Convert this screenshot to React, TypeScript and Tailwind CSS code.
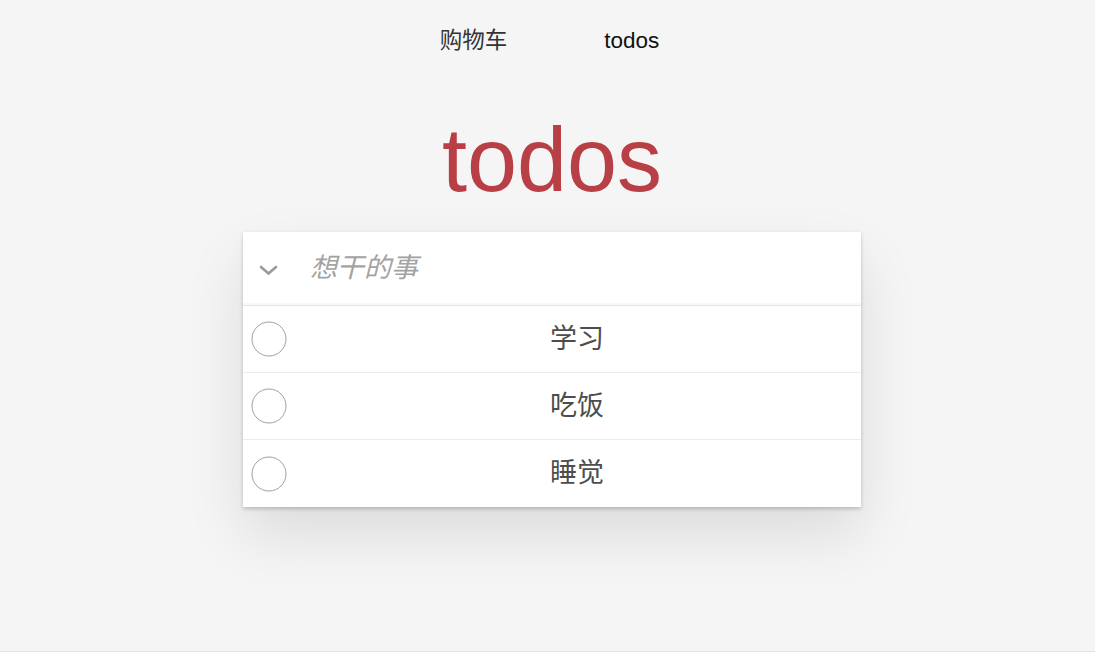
import React from "react";

const font = { fontFamily: '"Liberation Sans", Arial, "Noto Sans CJK SC", sans-serif' };

function Circle() {
  return (
    <svg width="36" height="36" viewBox="0 0 36 36" className="shrink-0">
      <circle cx="18" cy="18" r="17" fill="none" stroke="#a0a0a0" strokeWidth="1" />
    </svg>
  );
}

export default function App() {
  const todos = ["学习", "吃饭", "睡觉"];
  return (
    <div className="h-[652px] bg-[#f5f5f5] border-b border-[#e2e2e2] overflow-hidden" style={font}>
      <nav className="flex justify-center gap-[97px] pt-[27px] pl-[4px] text-[22.5px] leading-[27px]">
        <span className="text-[#333]">购物车</span>
        <span className="text-[#111]">todos</span>
      </nav>
      <div className="ml-[243px] w-[618px]">
        <h1 className="mt-[61px] text-center text-[90px] leading-none text-[#b83f45] font-normal">todos</h1>
        <div className="mt-[27px] bg-white shadow-[0_2px_4px_0_rgba(0,0,0,0.2),0_28px_56px_0_rgba(0,0,0,0.1)]">
          <div className="flex h-[73px] items-center shadow-[inset_0_-2px_1px_rgba(0,0,0,0.03)]">
            <div className="flex w-[67px] pl-[16px] pt-[4px]">
              <svg width="19" height="11" viewBox="0 0 19 11">
                <path d="M2 2 L9.5 8.5 L17 2" fill="none" stroke="#9a9a9a" strokeWidth="2.6" strokeLinecap="round" />
              </svg>
            </div>
            <span className="text-[27px] italic text-[#a3a3a3]">想干的事</span>
          </div>
          <ul className="border-t border-[#e6e6e6]">
            {todos.map((t, i) => (
              <li
                key={t}
                className={`relative flex h-[67px] items-center ${i < todos.length - 1 ? "border-b border-[#ededed]" : ""}`}
              >
                <div className="absolute left-[8px] top-1/2 -translate-y-1/2 flex">
                  <Circle />
                </div>
                <span className="flex-1 pl-[67px] pr-[17px] text-center text-[27px] text-[#4d4d4d]">{t}</span>
              </li>
            ))}
          </ul>
        </div>
      </div>
    </div>
  );
}
